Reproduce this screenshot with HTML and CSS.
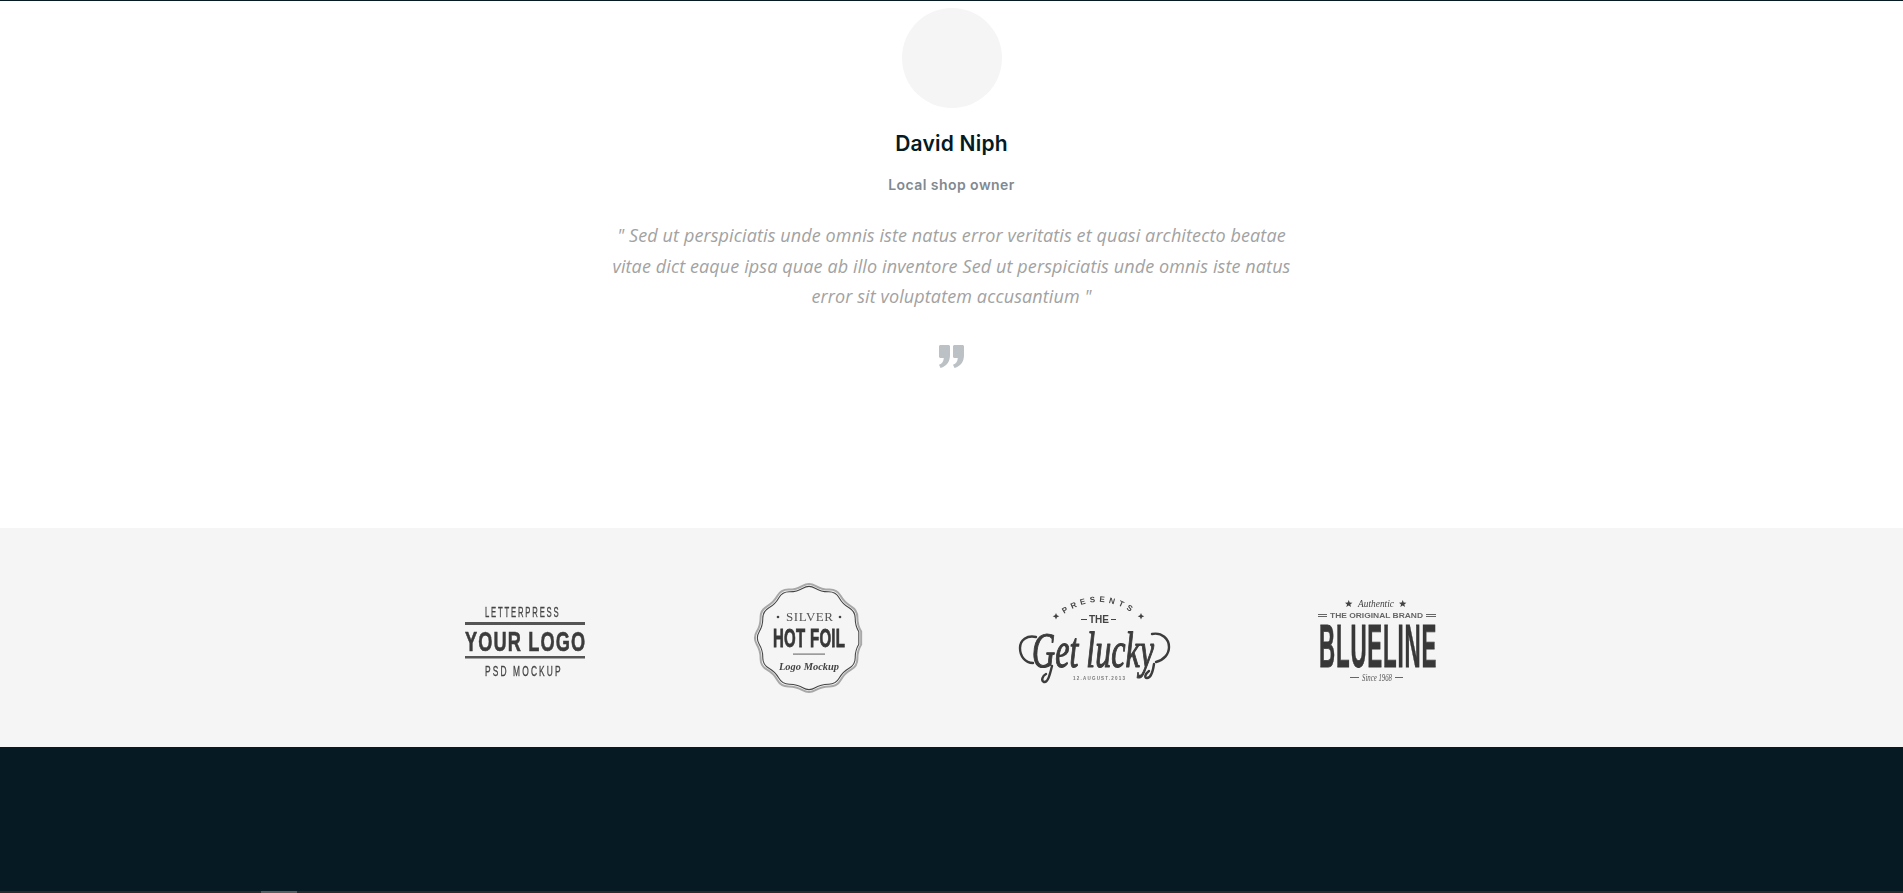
FILE: index.html
```html
<!DOCTYPE html>
<html lang="en">
<head>
<meta charset="utf-8">
<title>Testimonials</title>
<link rel="stylesheet" href="styles.css">
</head>
<body>
<main class="page">
  <section class="testimonial">
    <div class="avatar"></div>
    <h3 class="name">David Niph</h3>
    <p class="role">Local shop owner</p>
    <p class="quote">" Sed ut perspiciatis unde omnis iste natus error veritatis et quasi architecto beatae vitae dict eaque ipsa quae ab illo inventore Sed ut perspiciatis unde omnis iste natus error sit voluptatem accusantium "</p>
    <svg class="quote-icon" viewBox="0 0 27 23" aria-hidden="true">
      <path d="M1 1.500C1 .7 1.700 0 2.500 0H10.500C11.300 0 12 .7 12 1.500V10C12 16.500 9 21 2.500 23L1 19.800C4.200 18.500 5.600 16.300 5.800 13H2.500C1.700 13 1 12.300 1 11.500Z"/>
      <path d="M15 1.500C15 .7 15.700 0 16.500 0H24.500C25.300 0 26 .7 26 1.500V10C26 16.500 23 21 16.500 23L15 19.800C18.200 18.500 19.600 16.300 19.800 13H16.500C15.700 13 15 12.300 15 11.500Z"/>
    </svg>
  </section>

  <section class="brands">
    <div class="brand-row">
      <div class="brand">
        <svg class="logo" viewBox="0 0 150 120">
          <text class="l1-small" transform="translate(36 39) scale(.55 1)" textLength="134" lengthAdjust="spacing">LETTERPRESS</text>
          <rect class="rule-dark" x="16" y="44" width="120" height="3"/>
          <text class="l1-big" transform="translate(16 73) scale(.65 1)" textLength="185" lengthAdjust="spacing">YOUR LOGO</text>
          <rect class="rule-dark" x="16" y="78" width="120" height="2.500"/>
          <text class="l1-small" transform="translate(36 98) scale(.6 1)" textLength="126" lengthAdjust="spacing">PSD MOCKUP</text>
        </svg>
      </div>
      <div class="brand">
        <svg class="logo" viewBox="0 0 150 120">
          <defs>
            <path id="badge" d="M52.150,6.450Q48.300,12.900 48.400,20.450T41.950,31.700T31.700,41.950T20.450,48.400T6.450,52.150T-6.450,52.150T-20.450,48.400T-31.700,41.950T-41.950,31.700T-48.400,20.450T-52.150,6.450T-52.150,-6.450T-48.400,-20.450T-41.950,-31.700T-31.700,-41.950T-20.450,-48.400T-6.450,-52.150T6.450,-52.150T20.450,-48.400T31.700,-41.950T41.950,-31.700T48.400,-20.450T52.150,-6.450Z"/>
          </defs>
          <use href="#badge" class="ring-outer" transform="translate(75 60) scale(1)"/>
          <use href="#badge" class="ring-inner" transform="translate(75 60) scale(.955)"/>
          <circle class="ink" cx="44" cy="39" r="1.300"/>
          <circle class="ink" cx="106" cy="39" r="1.300"/>
          <text class="l2-silver" x="52" y="43" textLength="47" lengthAdjust="spacing">SILVER</text>
          <text class="l2-foil" transform="translate(39 69) scale(.6 1)" textLength="120" lengthAdjust="spacing">HOT FOIL</text>
          <rect class="rule-soft" x="59" y="75.500" width="32" height="1.200"/>
          <text class="l2-script" x="45" y="92" textLength="60" lengthAdjust="spacingAndGlyphs">Logo Mockup</text>
        </svg>
      </div>
      <div class="brand">
        <svg class="logo" viewBox="0 0 150 120">
          <defs>
            <path id="arc" d="M42 38Q80 10 118 38"/>
          </defs>
          <path class="ink" d="M37 35l1 2.300 2.300 1-2.300 1-1 2.300-1-2.300-2.300-1 2.300-1ZM122 35l1 2.300 2.300 1-2.300 1-1 2.300-1-2.300-2.300-1 2.300-1Z"/>
          <text class="l3-arc"><textPath href="#arc" startOffset="50%">PRESENTS</textPath></text>
          <text class="l3-the" x="80" y="45">THE</text>
          <rect class="ink" x="62" y="41" width="6" height="1"/>
          <rect class="ink" x="92" y="41" width="5" height="1"/>
          <text class="l3-script" x="13" y="89" textLength="122" lengthAdjust="spacingAndGlyphs">Get lucky</text>
          <path class="swash" d="M17 59C8 57 1 62 1 70C1 78 6 85 14 85"/>
          <path class="swash" d="M133 56C143 54 150 61 150 69C150 76 145 82 137 84"/>
          <path class="swash" d="M33 88C31 96 29 105 25 104C22 103 23 98 27 96"/>
          <path class="swash" d="M135 86C134 93 132 100 128 100C125 100 126 96 130 93"/>
          <text class="l3-date" x="54" y="102" textLength="52" lengthAdjust="spacing">12.AUGUST.2013</text>
        </svg>
      </div>
      <div class="brand">
        <svg class="logo" viewBox="0 0 150 120">
          <path class="ink" d="M44.700 22l1 2.600 2.700.1-2.100 1.700.8 2.700-2.400-1.500-2.400 1.500.8-2.700-2.100-1.700 2.700-.1ZM98.700 22l1 2.600 2.700.1-2.100 1.700.8 2.700-2.400-1.500-2.400 1.500.8-2.700-2.100-1.700 2.700-.1Z"/>
          <text class="l4-auth" x="54" y="29" textLength="36" lengthAdjust="spacingAndGlyphs">Authentic</text>
          <text class="l4-orig" x="26" y="40" textLength="93" lengthAdjust="spacingAndGlyphs">THE ORIGINAL BRAND</text>
          <path class="rule-line" d="M14 36.500h9M14 38.500h9M122 36.500h10M122 38.500h10"/>
          <text class="l4-big" transform="translate(15 89) scale(.36 1)" textLength="326" lengthAdjust="spacing">BLUELINE</text>
          <text class="l4-since" x="58" y="103" textLength="30" lengthAdjust="spacingAndGlyphs">Since 1968</text>
          <path class="rule-line" d="M46 99.500h9M91 99.500h8"/>
        </svg>
      </div>
    </div>
  </section>

  <footer class="footer"></footer>
  <div class="track"><div class="thumb"></div></div>
</main>
</body>
</html>
```

FILE: styles.css
```css
* { box-sizing: border-box; }

html, body {
  margin: 0;
  padding: 0;
  background: #fff;
  overflow: hidden;
}

.page {
  display: flex;
  flex-direction: column;
  height: 893px;
  border-top: 1px solid #051a23;
}

.testimonial {
  height: 527px;
  padding-top: 7px;
  display: flex;
  flex-direction: column;
  align-items: center;
  text-align: center;
  background: #fff;
}

.avatar {
  width: 100px;
  height: 100px;
  border-radius: 50%;
  background: #f5f5f5;
  flex: none;
}

.name {
  margin: 21px 0 0;
  font: 600 21px/30px "Inter", "Liberation Sans", sans-serif;
  letter-spacing: .2px;
  color: #051a23;
}

.role {
  margin: 15px 0 0;
  font: 600 14px/21px "Inter", "Liberation Sans", sans-serif;
  letter-spacing: .45px;
  color: #7f8a92;
}

.quote {
  width: 690px;
  margin: 25px 0 0;
  font: italic 400 18px/30.600px "Open Sans", "Liberation Sans", sans-serif;
  letter-spacing: .11px;
  color: #a2a2a2;
}

.quote-icon {
  width: 27px;
  height: 23px;
  margin-top: 33px;
  fill: #bcc1c5;
  flex: none;
}

.brands {
  height: 219px;
  background: #f5f5f5;
  padding-top: 50px;
}

.brand-row {
  width: 1140px;
  margin: 0 auto;
  display: grid;
  grid-template-columns: repeat(4, 1fr);
}

.brand {
  display: flex;
  justify-content: center;
}

.logo {
  width: 150px;
  height: 120px;
  display: block;
  overflow: visible;
  filter: blur(.4px);
}

.ink { fill: #444; }
.rule-dark { fill: #555; }
.rule-soft { fill: #777; }
.rule-line { fill: none; stroke: #666; stroke-width: 1; }

.l1-small {
  font: 400 14px "Liberation Sans", sans-serif;
  fill: #444;
  stroke: #444;
  stroke-width: .3;
}
.l1-big {
  font: 700 28px "Liberation Sans", sans-serif;
  fill: #3c3c3c;
  stroke: #3c3c3c;
  stroke-width: .6;
}

.ring-outer { fill: none; stroke: #a8a8a8; stroke-width: 2; }
.ring-inner { fill: none; stroke: #444; stroke-width: 1.100; }
.l2-silver { font: 400 13px "Liberation Serif", serif; fill: #555; }
.l2-foil {
  font: 700 25px "Liberation Sans", sans-serif;
  fill: #383838;
  stroke: #383838;
  stroke-width: .8;
}
.l2-script { font: italic 700 11px "Liberation Serif", serif; fill: #444; }

.l3-arc {
  font: 700 8px "Liberation Sans", sans-serif;
  letter-spacing: 4px;
  text-anchor: middle;
  fill: #444;
}
.l3-the {
  font: 700 10px "Liberation Sans", sans-serif;
  text-anchor: middle;
  fill: #444;
}
.l3-script {
  font: italic 400 50px "Liberation Serif", serif;
  fill: #3c3c3c;
  stroke: #3c3c3c;
  stroke-width: 1.200;
  stroke-linejoin: round;
}
.l3-date { font: 700 4.500px "Liberation Sans", sans-serif; fill: #777; }
.swash { fill: none; stroke: #3c3c3c; stroke-width: 2.400; stroke-linecap: round; }

.l4-auth { font: italic 400 11px "Liberation Serif", serif; fill: #444; }
.l4-since { font: italic 400 10px "Liberation Serif", serif; fill: #555; }
.l4-orig { font: 700 7.500px "Liberation Sans", sans-serif; fill: #666; }
.l4-big {
  font: 700 62px "Liberation Sans", sans-serif;
  fill: #383838;
  stroke: #383838;
  stroke-width: .8;
}

.footer {
  flex: 1;
  background: #051a23;
}

.track {
  height: 2px;
  background: #2a2a2a;
  padding-left: 261px;
  flex: none;
}

.thumb {
  width: 36px;
  height: 2px;
  background: #5c5c5c;
}
```
